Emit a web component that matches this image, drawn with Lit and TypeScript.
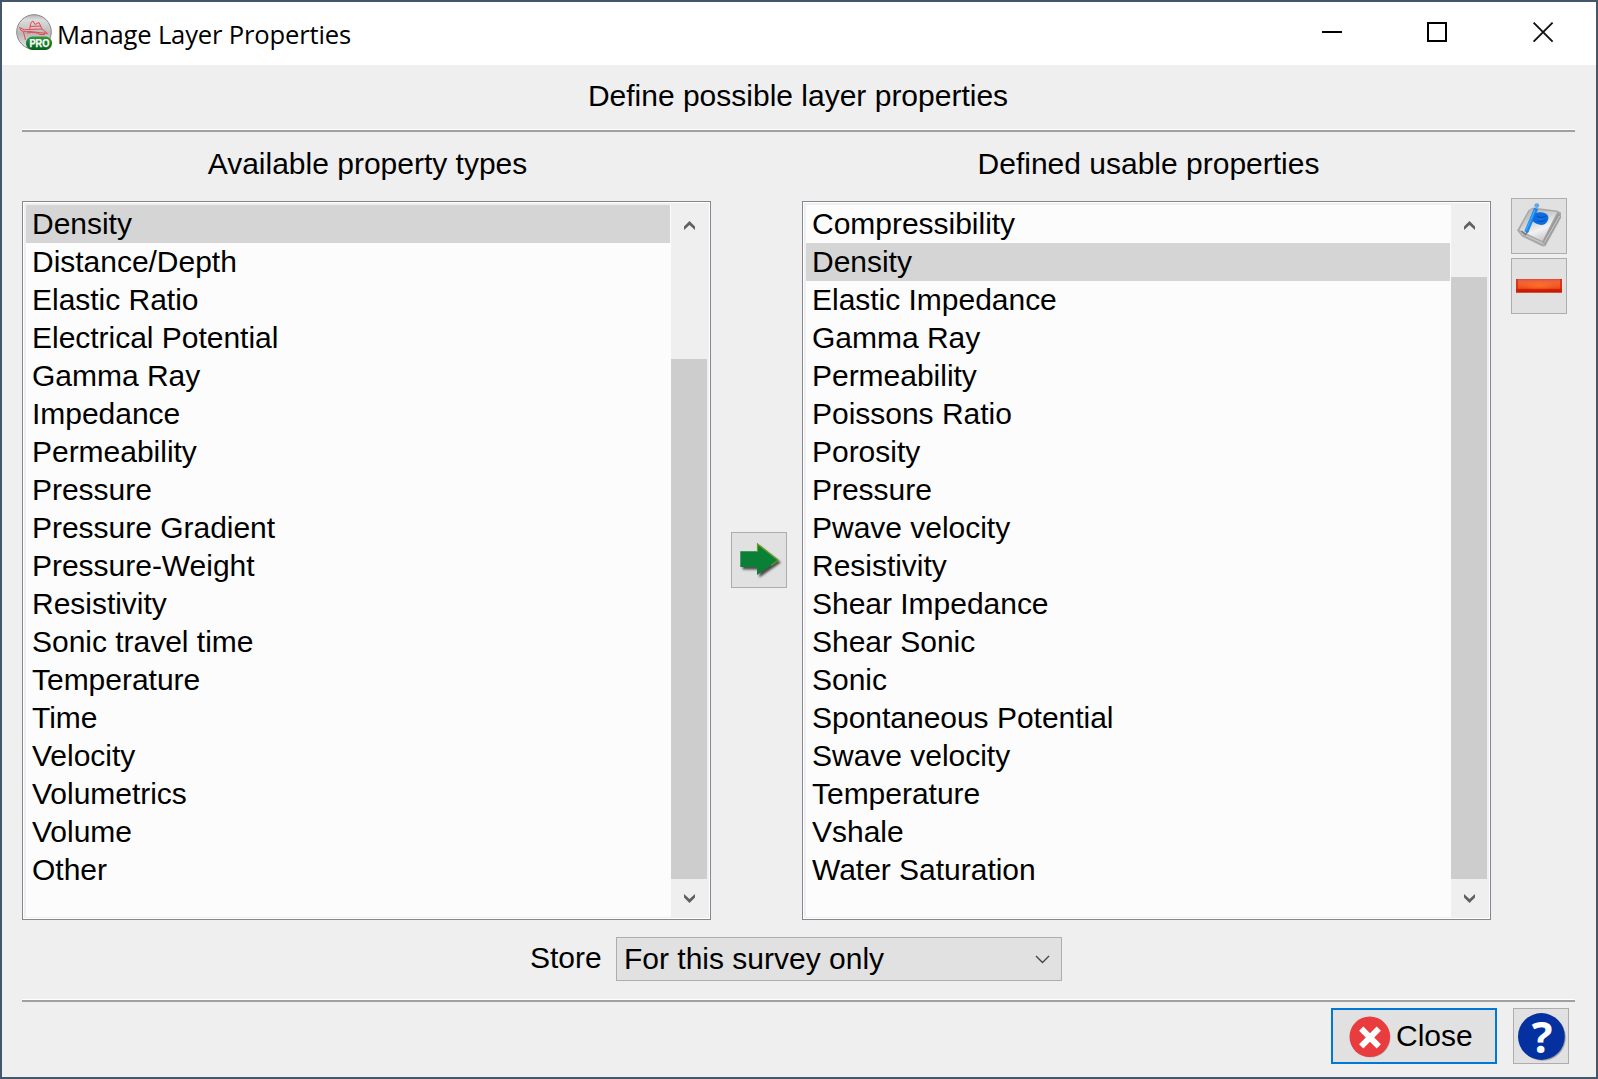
import { LitElement, html, css, svg } from "lit";
import { customElement, property } from "lit/decorators.js";

const available = [
  "Density", "Distance/Depth", "Elastic Ratio", "Electrical Potential", "Gamma Ray",
  "Impedance", "Permeability", "Pressure", "Pressure Gradient", "Pressure-Weight",
  "Resistivity", "Sonic travel time", "Temperature", "Time", "Velocity",
  "Volumetrics", "Volume", "Other",
];

const defined = [
  "Compressibility", "Density", "Elastic Impedance", "Gamma Ray", "Permeability",
  "Poissons Ratio", "Porosity", "Pressure", "Pwave velocity", "Resistivity",
  "Shear Impedance", "Shear Sonic", "Sonic", "Spontaneous Potential",
  "Swave velocity", "Temperature", "Vshale", "Water Saturation",
];

const chevronUp = svg`<path d="M0 9V5.6L5.5 0L11 5.6V9L5.5 3.9Z" fill="#606060"/>`;
const chevronDown = svg`<path d="M0 0V3.4L5.5 9L11 3.4V0L5.5 5.1Z" fill="#606060"/>`;

@customElement("list-box")
export class ListBox extends LitElement {
  @property({ attribute: false }) items: string[] = [];
  @property({ type: Number }) selected = 0;
  @property({ type: Number }) thumb = 0;

  static styles = css`
    :host {
      display: flex;
      box-sizing: border-box;
      width: 689px;
      height: 719px;
      border: 1px solid #828790;
      box-shadow: inset 0 0 0 1px #fff;
      background: #efefef;
      padding: 3px 3px 2px;
    }
    .rows {
      flex: 1;
      background: #fcfcfc;
    }
    .row {
      height: 38px;
      line-height: 38px;
      padding-left: 6px;
      margin-right: 1px;
      white-space: pre;
      letter-spacing: -0.02px;
    }
    .row.on {
      background: #d5d5d5;
    }
    .bar {
      width: 36px;
      display: flex;
      flex-direction: column;
      align-items: center;
      justify-content: space-between;
      padding: 16px 0 14px;
      box-sizing: border-box;
    }
    .bar svg {
      display: block;
    }
    .thumb {
      width: 36px;
      background: #cdcdcd;
      margin: auto 0 15px;
    }
  `;

  render() {
    return html`
      <div class="rows">
        ${this.items.map((t, i) => html`<div class="row ${i === this.selected ? "on" : ""}">${t}</div>`)}
      </div>
      <div class="bar">
        <svg width="11" height="9" viewBox="0 0 11 9">${chevronUp}</svg>
        <div class="thumb" style="height:${this.thumb}px"></div>
        <svg width="11" height="9" viewBox="0 0 11 9">${chevronDown}</svg>
      </div>
    `;
  }
}

@customElement("app-root")
export class AppRoot extends LitElement {
  static styles = css`
    :host {
      display: flex;
      flex-direction: column;
      box-sizing: border-box;
      width: 1598px;
      height: 1079px;
      border: 2px solid #44576a;
      background: #efefef;
      color: #000;
      font: 30px "Liberation Sans", Arial, sans-serif;
      overflow: hidden;
    }
    svg {
      display: block;
      flex: none;
    }
    .title {
      height: 63px;
      background: #fff;
      display: flex;
      padding-left: 14px;
      box-sizing: border-box;
    }
    .logo {
      margin-top: 12px;
    }
    .name {
      font: 25.6px/63px "Open Sans", "Noto Sans", sans-serif;
      margin-left: 4px;
      padding-top: 1px;
      letter-spacing: -0.17px;
      flex: 1;
      white-space: nowrap;
    }
    .controls {
      display: flex;
      gap: 85px;
      padding: 20px 42px 0 0;
    }
    .headline {
      height: 64px;
      line-height: 62px;
      padding-right: 2px;
      text-align: center;
    }
    .rule {
      height: 2px;
      border-top: 1px solid #fff;
      background: #a0a0a0;
      margin: 0 21px 0 20px;
      flex: none;
    }
    .body {
      display: flex;
      padding-left: 20px;
      height: 788px;
    }
    .heading {
      height: 69px;
      line-height: 63px;
      text-align: center;
      padding-left: 2px;
    }
    .heading.right {
      padding-left: 4px;
    }
    .move {
      width: 91px;
      padding: 400px 0 0 20px;
      box-sizing: border-box;
    }
    .side {
      display: flex;
      flex-direction: column;
      gap: 4px;
      padding: 66px 0 0 20px;
    }
    .btn {
      width: 56px;
      height: 56px;
      box-sizing: border-box;
      border: 1px solid #adadad;
      background: #e1e1e1;
    }
    .btn svg {
      margin: -1px;
    }
    .store {
      display: flex;
      height: 79px;
      padding: 17px 0 0 528px;
      box-sizing: border-box;
    }
    .label {
      width: 86px;
      line-height: 42px;
    }
    .combo {
      width: 446px;
      height: 44px;
      box-sizing: border-box;
      border: 1px solid #adadad;
      background: #e1e1e1;
      display: flex;
      align-items: center;
      justify-content: space-between;
      padding: 0 11px 0 7px;
      line-height: 42px;
    }
    .footer {
      display: flex;
      justify-content: flex-end;
      gap: 16px;
      padding: 6px 27px 0 0;
    }
    .close {
      width: 166px;
      height: 56px;
      box-sizing: border-box;
      border: 2px solid #0078d7;
      background: #e1e1e1;
      display: flex;
      line-height: 51px;
    }
    .close svg {
      margin: 5px 4px 0 16px;
    }
  `;

  render() {
    return html`
      <div class="title">
        <svg class="logo" width="37" height="37" viewBox="0 0 37 37">
          <defs>
            <linearGradient id="ball" x1="0" y1="0" x2="0" y2="1">
              <stop offset="0" stop-color="#b5b5b5" /><stop offset=".15" stop-color="#dcdcdc" />
              <stop offset=".55" stop-color="#b9b9b9" /><stop offset="1" stop-color="#e8e8e8" />
            </linearGradient>
            <linearGradient id="pro" x1="0" y1="0" x2="0" y2="1">
              <stop offset="0" stop-color="#2f9a3b" /><stop offset="1" stop-color="#06601a" />
            </linearGradient>
          </defs>
          <circle cx="18" cy="18" r="17.3" fill="url(#ball)" stroke="#888" stroke-width="1" />
          <g fill="none" stroke="#ea4651" stroke-width="1" stroke-linejoin="round">
            <path d="M3.5 13.5Q8 17 13.5 15.5L15 8.5L17 7L19 10.5L23 8.5L26 15L31.5 19.5M3.5 13.5L5 16.5Q9 18.5 14 17.5L27 19L31.5 19.5" />
            <path d="M14.2 12.5L25 12M13.5 15.5L26 15M7.5 18L9.5 26M11 19Q20 17.5 24 20.5L28.5 20.5V18.5" />
          </g>
          <rect x="10" y="22.5" width="26" height="13.5" rx="6.5" fill="url(#pro)" />
          <text x="23.4" y="32.9" text-anchor="middle" font-family="Liberation Sans, Arial, sans-serif"
            font-size="10" font-weight="700" fill="#fff" stroke="#fff" stroke-width=".25" textLength="20" lengthAdjust="spacingAndGlyphs">PRO</text>
        </svg>
        <div class="name">Manage Layer Properties</div>
        <div class="controls">
          <svg width="20" height="20"><path d="M0 10H20" stroke="#000" stroke-width="2" /></svg>
          <svg width="20" height="20"><path d="M1 1H19V19H1Z" fill="none" stroke="#000" stroke-width="2" /></svg>
          <svg width="22" height="21"><path d="M1.6 .7L20.6 19.7M20.6 .7L1.6 19.7" stroke="#111" stroke-width="1.9" /></svg>
        </div>
      </div>
      <div class="headline">Define possible layer properties</div>
      <div class="rule"></div>
      <div class="body">
        <div>
          <div class="heading">Available property types</div>
          <list-box .items=${available} .selected=${0} .thumb=${520}></list-box>
        </div>
        <div class="move">
          <div class="btn">
            <svg width="56" height="56">
              <defs>
                <filter id="soft" x="-20%" y="-20%" width="150%" height="150%"><feGaussianBlur stdDeviation="1.2" /></filter>
              </defs>
              <path transform="translate(2.4 2.6)" d="M9.3 19.3H26V11.3L47.5 28L26 43V35H9.3Z" fill="#333" opacity=".85" filter="url(#soft)" />
              <path d="M9.3 19.3H26V11.3L47.7 28.3L26 43V35H9.3Z" fill="#0a8036" />
              <path d="M26.5 20V12L47.2 28.3L40 33.5" fill="none" stroke="#6a9c1c" stroke-width="1.2" />
            </svg>
          </div>
        </div>
        <div>
          <div class="heading right">Defined usable properties</div>
          <list-box .items=${defined} .selected=${1} .thumb=${602}></list-box>
        </div>
        <div class="side">
          <div class="btn">
            <svg width="56" height="56">
              <defs>
                <linearGradient id="cover" x1=".2" y1="0" x2=".7" y2="1">
                  <stop offset="0" stop-color="#b4b4b4" /><stop offset=".4" stop-color="#d2d2d2" />
                  <stop offset=".65" stop-color="#f2f2f2" /><stop offset="1" stop-color="#c4c4c4" />
                </linearGradient>
                <radialGradient id="flag"><stop offset="0" stop-color="#1274e6" /><stop offset="1" stop-color="#0a6ae0" /></radialGradient>
                <filter id="edge" x="-10%" y="-10%" width="120%" height="120%"><feGaussianBlur stdDeviation=".6" /></filter>
              </defs>
              <g filter="url(#edge)">
                <path d="M17.5 12L22 9.5L46 12.5L50 14.5V20L34.5 48L31.5 48.5L11 38.5L6 32.5Z" fill="#a8a8a8" />
                <path d="M8 33.5L31.5 44.5L33.5 47L12 37Z" fill="#c6c6c6" />
                <path d="M47.5 14.5L49.5 19.5L34 46.5L32 43.5Z" fill="#989898" />
                <path d="M48.6 18L33.4 44.5" stroke="#cfcfcf" stroke-width="1" fill="none" />
                <path d="M19.5 11L46 14L31.5 43L8.5 32Z" fill="url(#cover)" />
                <path d="M10.5 33L14.5 36.5L17.5 32" fill="none" stroke="#777" stroke-width="1.6" />
              </g>
              <path d="M25.2 10.5L15.2 34" stroke="#1687ee" stroke-width="4.2" />
              <path d="M24 12L14.8 33" stroke="#45a6fa" stroke-width="1.3" />
              <circle cx="25.8" cy="7.6" r="2.4" fill="#5ba8ea" />
              <path d="M24 15.5Q29 13 34.5 15.5Q38 17 37.3 21Q36 26.5 30.5 27Q25 26.5 21.5 23Z" fill="url(#flag)" />
              <path d="M26 18Q30 21 35 18M26 23Q31 24.5 34.5 21.5" stroke="#0752b8" stroke-width="1.3" fill="none" />
            </svg>
          </div>
          <div class="btn">
            <svg width="56" height="56">
              <defs>
                <linearGradient id="red" x1="0" y1="0" x2="0" y2="1">
                  <stop offset="0" stop-color="#e0452c" /><stop offset=".15" stop-color="#ec6443" />
                  <stop offset=".35" stop-color="#f4602a" /><stop offset=".66" stop-color="#ee4d1c" />
                  <stop offset=".76" stop-color="#d01c04" /><stop offset=".92" stop-color="#c41a08" /><stop offset="1" stop-color="#d97c70" />
                </linearGradient>
                <radialGradient id="glow"><stop offset="0" stop-color="#ff7a2a" stop-opacity=".7" /><stop offset="1" stop-color="#ff7a2a" stop-opacity="0" /></radialGradient>
              </defs>
              <rect x="5" y="21" width="46" height="14" fill="url(#red)" />
              <ellipse cx="28" cy="27.5" rx="18" ry="4.5" fill="url(#glow)" />
              <path d="M6 21V34M50 21V34" stroke="#c9230f" stroke-width="2" opacity=".65" />
            </svg>
          </div>
        </div>
      </div>
      <div class="store">
        <div class="label">Store</div>
        <div class="combo">
          <span>For this survey only</span>
          <svg width="15" height="9"><path d="M1 1L7.5 7.5L14 1" fill="none" stroke="#444" stroke-width="1.4" /></svg>
        </div>
      </div>
      <div class="rule"></div>
      <div class="footer">
        <div class="close">
          <svg width="43" height="43">
            <circle cx="21.5" cy="22.6" r="20" fill="#999" opacity=".5" />
            <circle cx="20.8" cy="21.8" r="20.3" fill="#e93c3f" />
            <path d="M12.2 13.7L29.8 31.3M29.8 13.7L12.2 31.3" stroke="#fff" stroke-width="6" />
          </svg>
          <span>Close</span>
        </div>
        <div class="btn">
          <svg width="56" height="56">
            <circle cx="29.6" cy="29.6" r="23.2" fill="#777" opacity=".6" />
            <circle cx="28.4" cy="28.5" r="23.4" fill="#0430a0" />
            <text x="29.2" y="44.6" text-anchor="middle" font-family="Open Sans, sans-serif" font-size="43.5" font-weight="700" fill="#fff">?</text>
          </svg>
        </div>
      </div>
    `;
  }
}
